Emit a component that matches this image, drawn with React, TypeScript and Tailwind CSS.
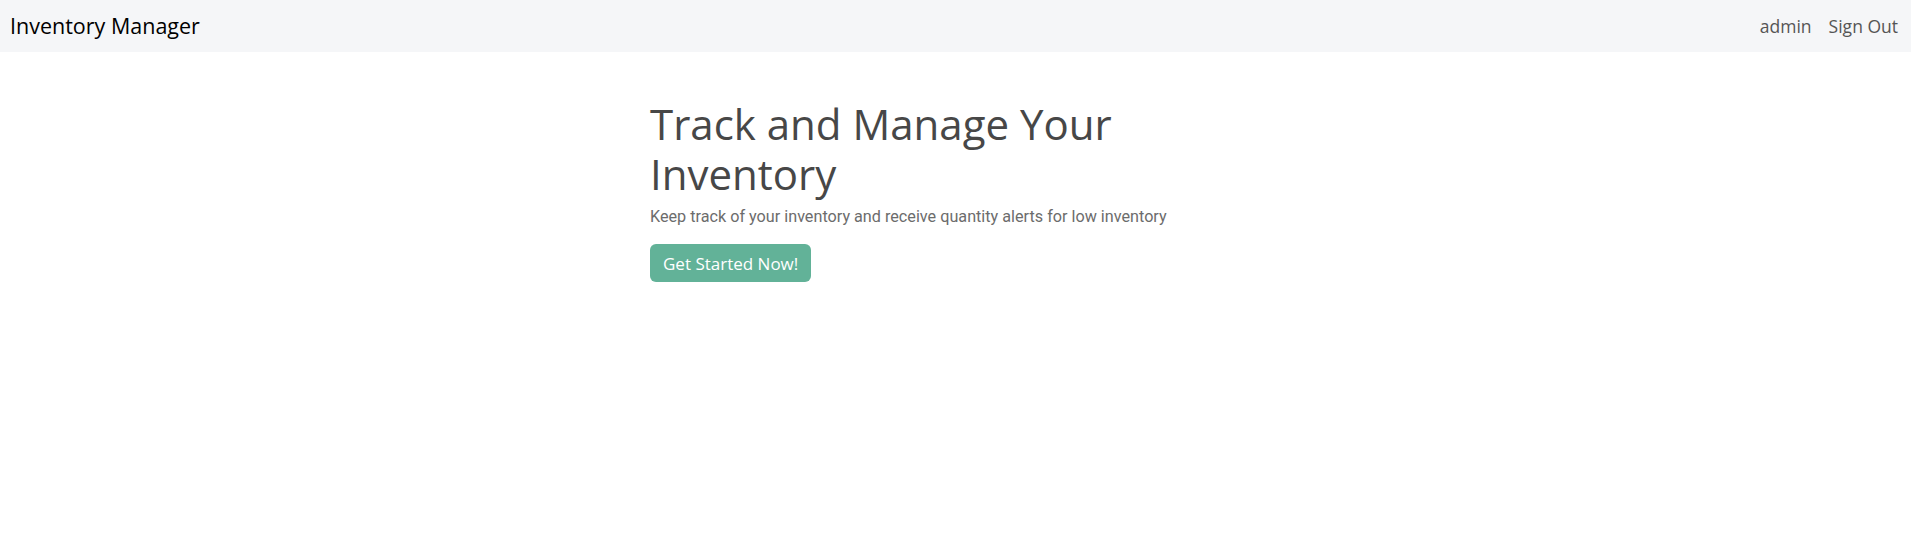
export default function App() {
  return (
    <div className="min-h-[536px] bg-white font-['Open_Sans',sans-serif]">
      <nav className="h-[52px] bg-[#f5f6f8] flex items-center justify-between pl-[10px] pr-[13px]">
        <span className="text-[21.5px] text-black">Inventory Manager</span>
        <div className="flex items-center gap-[17px] text-[17.5px] text-[#555]">
          <span>admin</span>
          <span>Sign Out</span>
        </div>
      </nav>

      <main className="mx-auto w-[611px] pt-[47px]">
        <h1 className="text-[42px] leading-[50px] text-[#474747]">Track and Manage Your Inventory</h1>
        <p className="mt-[6px] text-[16.2px] text-[#6c6c6c] font-['Roboto',sans-serif]">
          Keep track of your inventory and receive quantity alerts for low inventory
        </p>
        <button className="mt-[15px] h-[38px] px-[13px] rounded-[6px] bg-[#62b298] text-white text-[17px]">
          Get Started Now!
        </button>
      </main>
    </div>
  );
}
